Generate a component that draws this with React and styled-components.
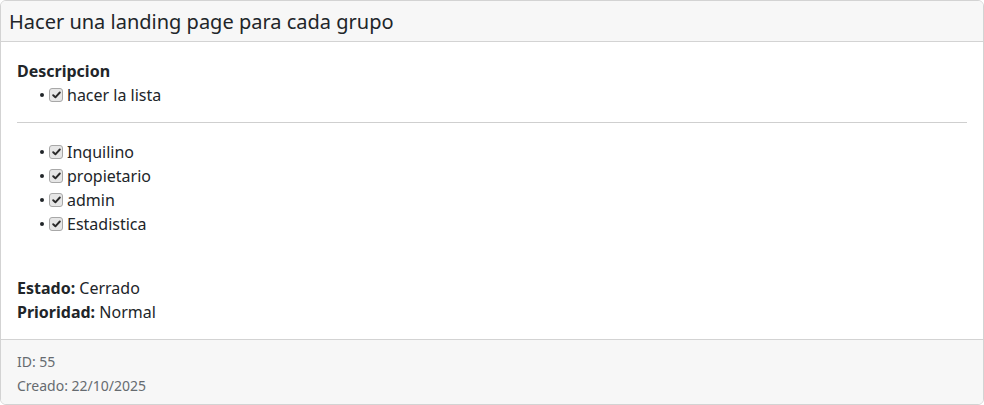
import React from 'react'
import styled, { createGlobalStyle } from 'styled-components'

const GlobalStyle = createGlobalStyle`
  html, body {
    margin: 0;
    padding: 0;
    background: #fff;
  }
  body {
    font-family: "Noto Sans", "Open Sans", sans-serif;
    color: #212529;
    font-size: 16px;
    line-height: 24px;
  }
`

const Card = styled.div`
  width: 984px;
  height: 405px;
  box-sizing: border-box;
  border: 1px solid #d3d3d3;
  border-radius: 6px;
  display: flex;
  flex-direction: column;
  overflow: hidden;
`

const Header = styled.div`
  background: #f7f7f7;
  border-bottom: 1px solid #d3d3d3;
  padding: 9px 8px 7px;
  font-size: 20px;
  line-height: 24px;
`

const Body = styled.div`
  flex: 1;
  padding: 17px 16px 14px;
`

const Label = styled.div`
  font-weight: 700;
`

const List = styled.ul`
  list-style: none;
  margin: 0 0 ${p => p.$gap || 0}px;
  padding: 0 0 0 23px;
`

const Item = styled.li`
  display: flex;
  align-items: center;
  height: 24px;
`

const Bullet = styled.span`
  width: 4px;
  height: 4px;
  border-radius: 50%;
  background: #212529;
  margin-right: 5px;
`

const Check = styled.span`
  width: 14px;
  height: 14px;
  box-sizing: border-box;
  border: 1px solid #a8a8a8;
  border-radius: 3px;
  background: #e6e6e6;
  display: inline-flex;
  align-items: center;
  justify-content: center;
  margin-right: 4px;
  svg {
    display: block;
  }
`

const Divider = styled.hr`
  border: 0;
  border-top: 1px solid #cfcfcf;
  margin: 15px 0 17px;
`

const Line = styled.div``

const Footer = styled.div`
  background: #f7f7f7;
  border-top: 1px solid #d3d3d3;
  padding: 10px 16px 6px;
  font-size: 14px;
  line-height: 24px;
  color: #666b70;
`

const CheckItem = ({ children }) => (
  <Item>
    <Bullet />
    <Check>
      <svg width="9" height="8" viewBox="0 0 9 8">
        <path d="M1.2 4.2 L3.4 6.3 L7.8 1.5" fill="none" stroke="#2a2a2a" strokeWidth="1.9" strokeLinecap="round" strokeLinejoin="round" />
      </svg>
    </Check>
    {children}
  </Item>
)

export default function App() {
  return (
    <>
      <GlobalStyle />
      <Card>
        <Header>Hacer una landing page para cada grupo</Header>
        <Body>
          <Label>Descripcion</Label>
          <List>
            <CheckItem>hacer la lista</CheckItem>
          </List>
          <Divider />
          <List $gap={40}>
            <CheckItem>Inquilino</CheckItem>
            <CheckItem>propietario</CheckItem>
            <CheckItem>admin</CheckItem>
            <CheckItem>Estadistica</CheckItem>
          </List>
          <Line><b>Estado:</b> Cerrado</Line>
          <Line><b>Prioridad:</b> Normal</Line>
        </Body>
        <Footer>
          <Line>ID: 55</Line>
          <Line>Creado: 22/10/2025</Line>
        </Footer>
      </Card>
    </>
  )
}
